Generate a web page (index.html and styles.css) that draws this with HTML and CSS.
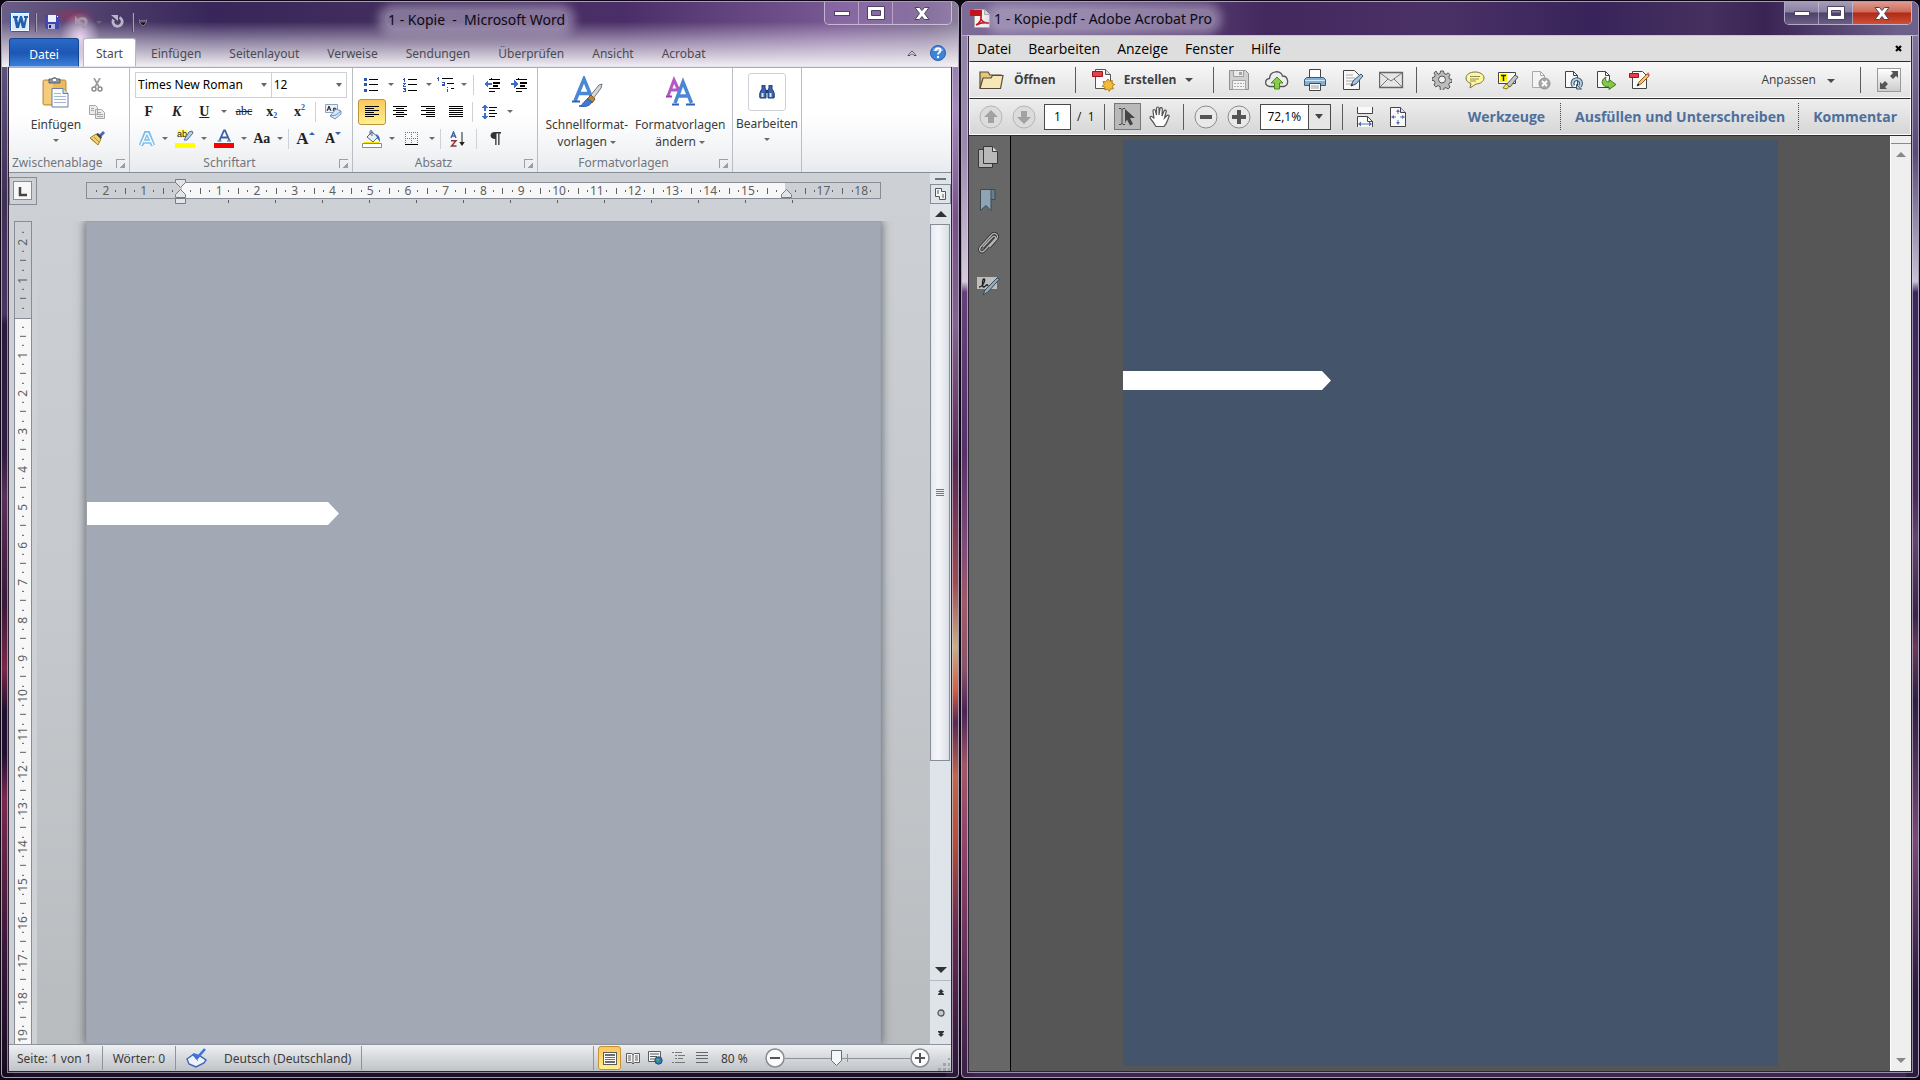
FILE: index.html
```html
<!DOCTYPE html>
<html lang="de">
<head>
  <meta charset="UTF-8" />
  <meta name="viewport" content="width=device-width, initial-scale=1" />
  <title>1 - Kopie</title>
  <link rel="stylesheet" href="styles.css">
</head>
<body>

<!-- Word -->
<section class="window word">
  <header class="word-head">
    <div class="titlebar">
      <div class="qat">
        <button class="qat-btn" aria-label="Word"><svg width="20" height="20" viewBox="0 0 20 20"><rect x=".5" y=".5" width="19" height="19" rx="1" fill="#f4f9ff" stroke="#2a5db0"/><rect x="2" y="2" width="16" height="16" fill="#dcebfb"/><path d="M3 4h5v2H7l1 5 2-7h2l2 7 1-5h-1V4h4v2h-1l-2 10h-3l-1.500-6-1.500 6H6L4 6H3z" fill="#1f5fae"/></svg></button>
        <span class="qat-line"></span>
        <button class="qat-btn" aria-label="Speichern"><svg width="14" height="14" viewBox="0 0 14 14"><path d="M0 0h14v14H2l-2-2z" fill="#4347b0"/><path d="M3 0h8v7H3z" fill="#eef0fb"/><path d="M3 9h7v5H3z" fill="#b9bde6"/><path d="M4 10h2v3H4z" fill="#20246e"/><path d="M12 1h1v1h-1z" fill="#fff"/></svg></button>
        <button class="qat-btn undo" aria-label="Rückgängig"><svg width="14" height="14" viewBox="0 0 14 14"><path d="M4 6c4-5 9-2 8 2-.3 2-2 3-3 5" fill="none" stroke="#a598a6" stroke-width="2.800"/><path d="M1 1v8h8z" fill="#a598a6"/></svg></button>
        <span class="tri"></span>
        <button class="qat-btn" aria-label="Wiederholen"><svg width="14" height="14" viewBox="0 0 14 14"><path d="M9.500 2.500a4.600 4.600 0 1 1-6 2" fill="none" stroke="#bcb5c8" stroke-width="2.800"/><path d="M1 0h7v6z" fill="#bcb5c8"/></svg></button>
        <span class="qat-line"></span>
        <button class="qat-more" aria-label="Anpassen"><svg width="8" height="7" viewBox="0 0 8 7"><path d="M0 0h8v1.500H0zM0 3h8L4 7z" fill="#18121f" stroke="#e8e2f0" stroke-width=".4"/></svg></button>
      </div>
      <h1 class="win-title">1 - Kopie&nbsp; -&nbsp; Microsoft Word</h1>
      <div class="controls">
        <button aria-label="Minimieren"><svg width="16" height="5"><rect x=".5" y=".5" width="15" height="4" fill="#fff" stroke="#4c4360"/></svg></button>
        <button aria-label="Maximieren"><svg width="18" height="14"><path d="M.5.500h17v13H.500zM4.500 4.500v5h9v-5z" fill="#fff" fill-rule="evenodd" stroke="#4c4360"/></svg></button>
        <button class="close" aria-label="Schließen"><svg width="16" height="13" viewBox="0 0 16 13"><path d="M1 .5h4.500L8 3.500 10.500.5H15L10.500 6.500l4.500 6h-4.500L8 9.500l-2.500 3H1l4.500-6z" fill="#fff" stroke="#4c4360"/></svg></button>
      </div>
    </div>
    <nav class="tabs">
      <button class="tab file">Datei</button>
      <button class="tab active">Start</button>
      <button class="tab">Einfügen</button>
      <button class="tab">Seitenlayout</button>
      <button class="tab">Verweise</button>
      <button class="tab">Sendungen</button>
      <button class="tab">Überprüfen</button>
      <button class="tab">Ansicht</button>
      <button class="tab">Acrobat</button>
      <span class="grow"></span>
      <button class="tab-icon" aria-label="Menüband minimieren"><svg width="10" height="8" viewBox="0 0 10 8"><path d="M1 6.500L5 2l4 4.500H7L5 4.500 3 6.500z" fill="#fff" stroke="#444b57"/></svg></button>
      <button class="tab-icon" aria-label="Hilfe"><svg width="16" height="16" viewBox="0 0 16 16"><circle cx="8" cy="8" r="7.500" fill="#3f83d8" stroke="#2360ad"/><path d="M3 6a5 4 0 0 1 10 0z" fill="#8bb8ee"/><path d="M5.500 6c0-3.500 5-3.500 5-.5 0 2-2.500 2-2.500 4" fill="none" stroke="#fff" stroke-width="1.800"/><circle cx="8" cy="12" r="1.200" fill="#fff"/></svg></button>
    </nav>
  </header>

  <div class="client">
    <div class="ribbon">
      <div class="group clip">
        <div class="group-body">
          <button class="big paste">
            <svg width="30" height="32" viewBox="0 0 30 32"><rect x="2" y="4" width="23" height="25" rx="1.500" fill="#eeb95a" stroke="#b98a3c"/><path d="M3 5h9v23H3z" fill="#f5cb7c"/><path d="M8 3h3a3 3 0 0 1 5 0h3v4H8z" fill="#8d97a3" stroke="#59626d"/><rect x="12" y="3" width="3" height="2" fill="#fff"/><path d="M11 12.500h11l5 5V31H11z" fill="#fafcff" stroke="#6b7f9d"/><path d="M22 12.500v5h5" fill="#cfdced" stroke="#6b7f9d"/><path d="M13 17.500h7M13 20.500h12M13 23.500h12M13 26.500h12" stroke="#a5b7cf"/></svg>
            <span>Einfügen</span><i class="tri"></i>
          </button>
          <div class="small-col">
            <button class="ib" aria-label="Ausschneiden"><svg width="12" height="14" viewBox="0 0 12 14"><path d="M3 0l5 9M9 0L4 9" stroke="#9a9a9a" stroke-width="1.600"/><circle cx="3" cy="11" r="2" fill="none" stroke="#8c8c8c" stroke-width="1.500"/><circle cx="9" cy="11" r="2" fill="none" stroke="#8c8c8c" stroke-width="1.500"/></svg></button>
            <button class="ib" aria-label="Kopieren"><svg width="16" height="14" viewBox="0 0 16 14"><path d="M.5.500h6l2 2v7h-8zM6.500 4.500h6l3 3v6h-9z" fill="#ececec" stroke="#a5a5a5"/><path d="M2 3.500h3M2 5.500h3M8 7.500h4M8 9.500h6M8 11.500h6" stroke="#a5a5a5"/></svg></button>
            <button class="ib" aria-label="Format übertragen"><svg width="16" height="15" viewBox="0 0 16 15"><path d="M10 4l4-4 2 2-4 4z" fill="#5063b4"/><path d="M1 7l6-4 5 5-3 6z" fill="#f0d272" stroke="#a07b28"/><path d="M7 3l2-1 4 4-1 2z" fill="#444"/><path d="M3 8l5 5M5 6l5 5" stroke="#b48d35"/></svg></button>
          </div>
        </div>
        <div class="group-label"><span>Zwischenablage</span><i class="launch"></i></div>
      </div>

      <div class="group font">
        <div class="group-body rows">
          <div class="row combos">
            <select class="font-name" aria-label="Schriftart"><option>Times New Roman</option></select>
            <select class="font-size" aria-label="Schriftgrad"><option>12</option></select>
          </div>
          <div class="row">
            <button class="ib glyph"><b>F</b></button>
            <button class="ib glyph"><b><em>K</em></b></button>
            <button class="ib glyph"><b><u>U</u></b></button><button class="ar" aria-label="Unterstreichung"><i class="tri"></i></button>
            <button class="ib glyph sm"><s>abc</s></button>
            <button class="ib glyph"><b>x</b><sub>2</sub></button>
            <button class="ib glyph"><b>x</b><sup>2</sup></button>
            <span class="sep"></span>
            <button class="ib" aria-label="Formatierung löschen"><svg width="17" height="16" viewBox="0 0 17 16"><path d="M.5.500h12v8H.500z" fill="#eaf1fb" stroke="#8ba3c7"/><path d="M2 7l2-5 2 5M3 5h2M8 4.500c3-1 3 0 3 2.500-2 0-3 0-3-1s2-1 3-1" fill="none" stroke="#222"/><path d="M5 12l6-7 5 2v3l-6 5z" fill="#dce8f8" stroke="#6f8fc0"/><path d="M5 12l6-1 5-4" fill="none" stroke="#6f8fc0"/></svg></button>
          </div>
          <div class="row">
            <button class="ib narrow" aria-label="Texteffekte"><svg width="16" height="16" viewBox="0 0 16 16"><path d="M2 14.500L7 2h2l5 12.500M4.500 10.500h7" fill="none" stroke="#7fbce8" stroke-width="4.500"/><path d="M2 14L7.200 2.500h1.600L14 14M4.500 10.500h7" fill="none" stroke="#f4faff" stroke-width="1.600"/></svg></button><button class="ar" aria-label="Effekte"><i class="tri"></i></button>
            <button class="ib" aria-label="Texthervorhebungsfarbe"><svg width="20" height="19" viewBox="0 0 20 19"><path d="M2 1h10v8H2z" fill="#ffff64"/><text x="2" y="8" font-size="9" font-family="Liberation Sans" fill="#222">ab</text><path d="M9 11l5-8 3-1 1 2-6 7z" fill="#b9cdea" stroke="#506d9c"/><path d="M0 14h20v5H0z" fill="#ff0"/></svg></button><button class="ar" aria-label="Hervorhebung"><i class="tri"></i></button>
            <button class="ib" aria-label="Schriftfarbe"><svg width="20" height="19" viewBox="0 0 20 19"><path d="M5.500 11.500L10 1.500h1L15.500 11.500M7 8.500h7" fill="none" stroke="#3c5fa5" stroke-width="1.800"/><path d="M3.500 12h4M13 12h4" stroke="#3c5fa5" stroke-width="1.200"/><path d="M0 14h20v5H0z" fill="#f00"/></svg></button><button class="ar" aria-label="Farbe"><i class="tri"></i></button>
            <button class="ib narrow glyph"><b>Aa</b></button><button class="ar" aria-label="Groß-/Kleinschreibung"><i class="tri"></i></button>
            <span class="sep"></span>
            <button class="ib glyph lg"><b>A</b><i class="up"></i></button>
            <button class="ib glyph"><b>A</b><i class="down"></i></button>
          </div>
        </div>
        <div class="group-label"><span>Schriftart</span><i class="launch"></i></div>
      </div>

      <div class="group para">
        <div class="group-body rows">
          <div class="row">
            <button class="ib" aria-label="Aufzählungszeichen"><svg width="14" height="14" shape-rendering="crispEdges"><path d="M5 1h9v1H5zM5 6h9v1H5zM5 12h9v1H5z"/><path d="M0 0h3v3H0zM0 5h3v3H0zM0 11h3v3H0z" fill="#2c56b0"/></svg></button><button class="ar" aria-label="Aufzählung"><i class="tri"></i></button>
            <button class="ib" aria-label="Nummerierung"><svg width="14" height="14" shape-rendering="crispEdges"><path d="M5 1h9v1H5zM5 6h9v1H5zM5 12h9v1H5z"/><path d="M1 0h1v4H1zM0 1h1v1H0zM0 5h3v1H2v1H1v1h2v1H0V7h1V6H0zM0 10h3v4H0v-1h2v-1H1v-1H0z" fill="#2c56b0"/></svg></button><button class="ar" aria-label="Nummern"><i class="tri"></i></button>
            <button class="ib narrow" aria-label="Liste mit mehreren Ebenen"><svg width="18" height="15" shape-rendering="crispEdges"><path d="M5 1h11v1H5zM10 6h7v1h-7zM14 11h3v1h-3z"/><path d="M1 0h1v4H1zM0 1h1v1H0zM5 5h3v4H5V7h2V6H5zM10 10h1v1h-1zM10 12h1v3h-1z" fill="#2c56b0"/></svg></button><button class="ar" aria-label="Ebenen"><i class="tri"></i></button>
            <span class="sep wide"></span>
            <button class="ib" aria-label="Einzug verkleinern"><svg width="16" height="14" shape-rendering="crispEdges"><path d="M5 1h11v1H5zM9 4h7v2H9zM9 7h5v2H9zM5 10h11v1H5zM5 13h6v1H5zM7 0h1v2H7z"/><path d="M0 6l4-4v3h4v2H4v3z" fill="#3a6fd0"/></svg></button>
            <button class="ib" aria-label="Einzug vergrößern"><svg width="16" height="14" shape-rendering="crispEdges"><path d="M5 1h11v1H5zM9 4h7v2H9zM9 7h5v2H9zM5 10h11v1H5zM5 13h6v1H5zM7 0h1v2H7z"/><path d="M7 6L3 2v3H0v2h3v3z" fill="#3a6fd0"/></svg></button>
          </div>
          <div class="row">
            <button class="ib on" aria-label="Linksbündig"><svg width="14" height="12" shape-rendering="crispEdges"><path d="M0 0h14v1H0zM0 2h9v1H0zM0 4h14v1H0zM0 6h9v1H0zM0 8h14v1H0zM0 10h9v1H0z"/></svg></button>
            <button class="ib" aria-label="Zentriert"><svg width="14" height="12" shape-rendering="crispEdges"><path d="M0 0h14v1H0zM3 2h8v1H3zM0 4h14v1H0zM3 6h8v1H3zM0 8h14v1H0zM3 10h8v1H3z"/></svg></button>
            <button class="ib" aria-label="Rechtsbündig"><svg width="14" height="12" shape-rendering="crispEdges"><path d="M0 0h14v1H0zM5 2h9v1H5zM0 4h14v1H0zM5 6h9v1H5zM0 8h14v1H0zM5 10h9v1H5z"/></svg></button>
            <button class="ib" aria-label="Blocksatz"><svg width="14" height="12" shape-rendering="crispEdges"><path d="M0 0h14v1H0zM0 2h14v1H0zM0 4h14v1H0zM0 6h14v1H0zM0 8h14v1H0zM0 10h14v1H0z"/></svg></button>
            <span class="sep"></span>
            <button class="ib" aria-label="Zeilenabstand"><svg width="16" height="16" shape-rendering="crispEdges"><path d="M7 3h8v1H7zM7 6h6v1H7zM7 9h8v1H7zM7 12h6v1H7z"/><path d="M3 0l3 4H4v3H2V4H0zM3 16l3-4H4V9H2v3H0z" fill="#3a6fd0"/></svg></button><button class="ar" aria-label="Abstand"><i class="tri"></i></button>
          </div>
          <div class="row">
            <button class="ib" aria-label="Schattierung"><svg width="20" height="18" viewBox="0 0 20 18"><path d="M5 7l5-5 6 5-5 5z" fill="#e7eef7" stroke="#56677d"/><path d="M8 5V1q1-1 2 0v5" fill="none" stroke="#56677d"/><path d="M14 4q4 1 4 8l-3-4z" fill="#3565b0"/><path d="M2 12h15v1H2z" fill="#f4e400"/><path d="M.5 13.500h19v4H.500z" fill="#fff" stroke="#8c8c8c"/></svg></button><button class="ar" aria-label="Schattierungsfarbe"><i class="tri"></i></button>
            <button class="ib" aria-label="Rahmen"><svg width="14" height="14"><path d="M.5 0v12M6.500 0v12M12.500 0v12M0 .5h13M0 6.500h13" stroke="#777" stroke-dasharray="1 1"/><path d="M0 12h13v1H0z"/></svg></button><button class="ar" aria-label="Rahmenlinien"><i class="tri"></i></button>
            <span class="sep"></span>
            <button class="ib" aria-label="Sortieren"><svg width="16" height="16" viewBox="0 0 16 16"><path d="M1 7l2.500-6L6 7M2 5h3" fill="none" stroke="#3a62ae" stroke-width="1.400"/><path d="M1 9.700h5L1.500 15H6.500" fill="none" stroke="#8c3434" stroke-width="1.400"/><path d="M11.500 1h1v10h2.300L12 15l-2.800-4h2.300z" fill="#222"/></svg></button>
            <span class="sep wide"></span>
            <button class="ib" aria-label="Alle anzeigen"><svg width="11" height="13" viewBox="0 0 11 13"><path d="M5 0h6v1.500H9.500V13H8.200V1.500H6.500V13H5.200V7C-1 7-1 0 5 0z" fill="#333"/></svg></button>
          </div>
        </div>
        <div class="group-label"><span>Absatz</span><i class="launch"></i></div>
      </div>

      <div class="group styles">
        <div class="group-body">
          <button class="big">
            <svg width="32" height="32" viewBox="0 0 32 32"><path d="M4 25L13 3l9 22M7.500 17.500h11" fill="none" stroke="#4b87d6" stroke-width="3.500"/><path d="M1 25.500h8M16 25.500h6" stroke="#2f62b0" stroke-width="2"/><path d="M19 20l9-11 3-1-1 4-8 11z" fill="#d5d8dc" stroke="#70767e"/><path d="M16 23l4-4 4 4-3 4z" fill="#b9853c" stroke="#7a5422"/><path d="M8 30c4 0 5-6 9-7l4 3c-3 5-8 5-13 4z" fill="#3f7bd0" stroke="#2a5cab"/></svg>
            <span>Schnellformat-</span><span>vorlagen <i class="tri"></i></span>
          </button>
          <button class="big">
            <svg width="32" height="32" viewBox="0 0 32 32"><path d="M4 20L10 4l6 13M6.500 14h7" fill="none" stroke="#b558c4" stroke-width="3"/><path d="M2 20.500h6" stroke="#9c3aac" stroke-width="2"/><path d="M11 27L19 6l8.500 21M14 20h10" fill="none" stroke="#4b87d6" stroke-width="3.500"/><path d="M8 28.500h7M22 28.500h9" stroke="#2f62b0" stroke-width="2"/></svg>
            <span>Formatvorlagen</span><span>ändern <i class="tri"></i></span>
          </button>
        </div>
        <div class="group-label"><span>Formatvorlagen</span><i class="launch"></i></div>
      </div>

      <div class="group edit">
        <button class="big">
          <span class="find-box"><svg width="16" height="14" viewBox="0 0 16 14"><path d="M3 0h3v3l1 2v8H1c-1-3 0-7 2-9zM10 0h3v4c2 2 3 6 2 9H9V5l1-2z" fill="#3c63a8" stroke="#1f3f7c"/><path d="M7 5h2v3H7z" fill="#1f3f7c"/><path d="M2.500 8h2v4h-2zM10.500 8h2v4h-2z" fill="#dbe8fa"/></svg></span>
          <span>Bearbeiten</span><i class="tri"></i>
        </button>
      </div>
    </div>

    <div class="workspace">
      <div class="doc-area">
        <div class="ruler-row">
          <button class="tab-stop" aria-label="Tabstopp"><svg width="20" height="20"><rect x=".5" y=".5" width="18" height="18" fill="#f7f7f8" stroke="#868d97"/><path d="M7 6v8h7" fill="none" stroke="#444" stroke-width="2.500"/></svg></button>
          <div class="ruler-wrap">
            <div class="hruler" id="hruler"></div>
            <div class="markers">
              <svg width="12" height="26" viewBox="0 0 12 26"><path d="M.5.500h10v3l-5 5-5-5zM.500 18.500v-3l5-5 5 5v3zM.500 19.500h10v5H.500z" fill="#e2e4e7" stroke="#777d86"/></svg>
              <svg width="12" height="26" viewBox="0 0 12 26"><path d="M.5 18.500v-3l5-5 5 5v3z" fill="#e2e4e7" stroke="#777d86"/></svg>
            </div>
          </div>
        </div>
        <div class="page-row">
          <div class="vruler-wrap"><div class="vruler" id="vruler"></div></div>
          <div class="page"><svg class="arrow" width="252" height="23" viewBox="0 0 252 23"><path d="M0 0h241l11 11.500L241 23H0z" fill="#fff"/></svg></div>
        </div>
      </div>
      <div class="scroll">
        <i class="split"></i>
        <button class="sb ruler-toggle" aria-label="Lineal"><svg width="14" height="14" viewBox="0 0 14 14"><path d="M1.500 1.500h6v3h4v8h-6v-3h-4z" fill="#f5f6f8" stroke="#555"/><path d="M3 4h2M3 6h2M8 8h2M8 10h2" stroke="#555"/></svg></button>
        <button class="sb" aria-label="Nach oben"><svg width="12" height="6"><path d="M0 6l6-6 6 6z" fill="#333"/></svg></button>
        <div class="track"><div class="thumb"><i></i></div></div>
        <button class="sb" aria-label="Nach unten"><svg width="12" height="6"><path d="M0 0h12L6 6z" fill="#333"/></svg></button>
        <div class="browse">
          <button aria-label="Vorherige Seite"><svg width="6" height="6"><path d="M3 0l3 3H0zM3 2l3 3H0zM0 5h6v1H0z" fill="#333"/></svg></button>
          <button aria-label="Browseobjekt"><svg width="8" height="8"><circle cx="4" cy="4" r="3" fill="#c6c9cc" stroke="#555" stroke-width="1.300"/></svg></button>
          <button aria-label="Nächste Seite"><svg width="6" height="6"><path d="M0 0h6v1H0zM0 1h6L3 4zM0 3h6L3 6z" fill="#333"/></svg></button>
        </div>
      </div>
    </div>

    <footer class="status">
      <span class="st">Seite: 1 von 1</span>
      <span class="st">Wörter: 0</span>
      <span class="st lang"><svg width="22" height="20" viewBox="0 0 22 20"><path d="M1 11l7-5 6 2 6 4-2 3-8 4-7-3z" fill="#eef2fa" stroke="#3f65b5" stroke-width="1.400"/><path d="M9 10l3 3" stroke="#9a9a9a"/><path d="M7 6l4 4 8-9" fill="none" stroke="#3d72d8" stroke-width="2.600"/></svg>Deutsch (Deutschland)</span>
      <span class="grow"></span>
      <i class="st-line"></i>
      <button class="vw on" aria-label="Seitenlayout"><svg width="14" height="13" shape-rendering="crispEdges"><rect x="0" y="0" width="14" height="13" fill="#5c5c5c"/><path d="M1 1h12v11H1z" fill="#fff"/><path d="M2 2h10v2H2zM2 5h10v1H2zM2 7h10v1H2zM2 9h10v2H2z" fill="#6d6d6d"/></svg></button>
      <button class="vw" aria-label="Vollbild-Lesemodus"><svg width="14" height="13" viewBox="0 0 14 13"><path d="M.5 1.500h5l1.500 1 1.500-1h5v9h-5L7 12l-1.500-1.500h-5z" fill="#f6f6f6" stroke="#5c5c5c"/><path d="M7 2v9M2 4h3M2 6h3M2 8h3M9 4h3M9 6h3M9 8h3" stroke="#5c5c5c"/></svg></button>
      <button class="vw" aria-label="Weblayout"><svg width="15" height="14" viewBox="0 0 15 14"><path d="M.5.500h12v10H.500z" fill="#f6f6f6" stroke="#5c5c5c"/><path d="M2 3h9M2 5.500h7M2 8h5" stroke="#5c5c5c"/><circle cx="10.500" cy="9.500" r="3.700" fill="#2f77b5" stroke="#2a4d79"/><path d="M8 9q2-3 3-1t-1 3z" fill="#4fae57"/></svg></button>
      <button class="vw" aria-label="Gliederung"><svg width="13" height="12" shape-rendering="crispEdges"><path d="M0 0h2v1H0zM3 0h7v1H3zM3 3h2v1H3zM6 3h7v1H6zM3 6h2v1H3zM6 6h5v1H6zM0 10h2v1H0zM3 10h10v1H3z" fill="#777"/></svg></button>
      <button class="vw" aria-label="Entwurf"><svg width="12" height="12" shape-rendering="crispEdges"><path d="M0 0h12v1H0zM0 3h12v1H0zM0 6h12v1H0zM0 10h12v1H0z" fill="#666"/></svg></button>
      <button class="zoom-val">80 %</button>
      <button class="zoom-btn" aria-label="Verkleinern"><svg width="20" height="20"><circle cx="10" cy="10" r="9" fill="#fbfbfc" stroke="#868c94" stroke-width="1.500"/><path d="M5 9h10v2H5z" fill="#555"/></svg></button>
      <input class="zoom-range" type="range" min="10" max="190" value="82" aria-label="Zoom">
      <button class="zoom-btn" aria-label="Vergrößern"><svg width="20" height="20"><circle cx="10" cy="10" r="9" fill="#fbfbfc" stroke="#868c94" stroke-width="1.500"/><path d="M5 9h4V5h2v4h4v2h-4v4H9v-4H5z" fill="#555"/></svg></button>
      <svg class="grip" width="13" height="13" shape-rendering="crispEdges"><path d="M10 0h2v2h-2zM5 5h3v3H5zM10 5h2v3h-2zM0 10h3v3H0zM5 10h3v3H5zM10 10h2v3h-2z" fill="#a0a6ae"/></svg>
    </footer>
  </div>
</section>

<!-- Acrobat -->
<section class="window acro">
  <header class="titlebar">
    <svg class="pdf-icon" width="22" height="20" viewBox="0 0 22 20"><path d="M4.500.500h10l5 5v13h-15z" fill="#f6f6f6" stroke="#a7a7a7"/><path d="M14.500.500v5h5" fill="#ddd" stroke="#a7a7a7"/><path d="M0 1h12v6H0z" fill="#c3161c"/><path d="M6 16c4-2 6-6 5-9-1 4 3 8 8 7-5-1-9 0-13 2z" fill="none" stroke="#c3161c" stroke-width="1.600"/></svg>
    <h1 class="win-title">1 - Kopie.pdf - Adobe Acrobat Pro</h1>
    <div class="controls">
      <button aria-label="Minimieren"><svg width="16" height="5"><rect x=".5" y=".5" width="15" height="4" fill="#fff" stroke="#4c4360"/></svg></button>
      <button aria-label="Maximieren"><svg width="18" height="14"><path d="M.5.500h17v13H.500zM4.500 4.500v5h9v-5z" fill="#fff" fill-rule="evenodd" stroke="#4c4360"/></svg></button>
      <button class="close" aria-label="Schließen"><svg width="16" height="13" viewBox="0 0 16 13"><path d="M1 .5h4.500L8 3.500 10.500.5H15L10.500 6.500l4.500 6h-4.500L8 9.500l-2.500 3H1l4.500-6z" fill="#fff" stroke="#4c4360"/></svg></button>
    </div>
  </header>

  <div class="client">
    <nav class="menubar">
      <button>Datei</button>
      <button>Bearbeiten</button>
      <button>Anzeige</button>
      <button>Fenster</button>
      <button>Hilfe</button>
      <span class="grow"></span>
      <button class="menu-x" aria-label="Dokument schließen"><svg width="7" height="7"><path d="M1 1l5 5M6 1L1 6" stroke="#000" stroke-width="2.200"/></svg></button>
    </nav>

    <div class="bar">
      <button class="txt"><svg width="26" height="20" viewBox="0 0 26 20"><path d="M1 18V2h8l2 3h11v4" fill="#e2c878" stroke="#55493a" stroke-width="1.200"/><path d="M1 18.500L4 8h8l1.500-2.500H24L21.500 18.500z" fill="#f6e8b6" stroke="#55493a" stroke-width="1.200"/></svg>Öffnen</button>
      <i class="bar-sep"></i>
      <button class="txt"><svg width="24" height="24" viewBox="0 0 24 24"><path d="M4.500 1.500h10l5 5v14h-15z" fill="#fbfbfb" stroke="#555"/><path d="M14.500 1.500v5h5" fill="#ddd" stroke="#555"/><path d="M1.500 3.500h10v5h-10z" fill="#e5404a" stroke="#a3151e"/><path d="M17 11l1.600 2.300 2.700-.8-.3 2.800 2.600 1.200-2.300 1.700 1 2.700-2.800-.1-1.200 2.600L16.500 21l-2.600 1-.1-2.800-2.600-1 2-2-1.200-2.600 2.800.1z" fill="#f3bb3d" stroke="#b07d16"/></svg>Erstellen <i class="tri big-tri"></i></button>
      <i class="bar-sep"></i>
      <button class="tb dim" aria-label="Speichern"><svg width="22" height="22" viewBox="0 0 22 22"><path d="M1.500 1.500h16l3 3v16h-19z" fill="#cfcfcf" stroke="#8f8f8f"/><path d="M5.500 1.500h10v6h-10z" fill="#ececec" stroke="#9c9c9c"/><path d="M11 3h3v3h-3z" fill="#a5a5a5"/><path d="M4.500 11.500h13v9h-13z" fill="#f2f2f2" stroke="#a5a5a5"/><path d="M6 14.500h10M6 17.500h10" stroke="#aaa" stroke-dasharray="2 1"/></svg></button>
      <button class="tb" aria-label="Cloud"><svg width="24" height="20" viewBox="0 0 24 20"><path d="M5 16.500C-1 16-.5 9 4.500 8.500 5 0 16 0 17.500 6c6 0 7 9 1.500 10.500z" fill="#ededed" stroke="#555" stroke-width="1.300"/><path d="M12 7l6 6h-3.500v6h-5v-6H6z" fill="#8acb50" stroke="#4a8a1c"/></svg></button>
      <button class="tb" aria-label="Drucken"><svg width="24" height="24" viewBox="0 0 24 24"><path d="M6.500 1.500h11v9h-11z" fill="#fff" stroke="#444"/><path d="M3.500 9.500h17l2 2v6h-21v-6z" fill="#84b0d3" stroke="#3b5c78"/><path d="M2 12.500h20" stroke="#d2e6f5"/><path d="M6.500 15.500h11v7h-11z" fill="#fff" stroke="#444"/><path d="M8 18h8M8 20h8" stroke="#999"/></svg></button>
      <button class="tb" aria-label="Bearbeiten"><svg width="22" height="22" viewBox="0 0 22 22"><path d="M1.500 1.500h11l5 5v14h-16z" fill="#f8f8f8" stroke="#444"/><path d="M4 6h7M4 9h9M4 12h7M4 15h6" stroke="#aaa"/><path d="M9 17l2-5 8-7 2 2-7 8z" fill="#a5c6e2" stroke="#3b556e"/><path d="M9 17l2-1-1-1z"/></svg></button>
      <button class="tb" aria-label="E-Mail"><svg width="25" height="18" viewBox="0 0 25 18"><path d="M.5 1.500h23v15H.500z" fill="#e6e6e6" stroke="#666" stroke-width="1.300"/><path d="M1 2l11 8L23 2M1 16l8-8M23 16l-8-8" fill="none" stroke="#777"/></svg></button>
      <i class="bar-sep"></i>
      <button class="tb slim" aria-label="Einstellungen"><svg width="20" height="20" viewBox="0 0 20 20"><path d="M8.500 1h3l.5 2.500 2 .8 2.200-1.400 1.900 2-1.300 2.100.8 2 2.400.5v2.800l-2.500.5-.8 2 1.300 2.200-1.900 1.900-2.200-1.300-2 .8-.5 2.600h-3L8 16.400l-2-.8-2.200 1.300-1.900-1.900 1.300-2.200-.8-2L0 10.300V7.800L2.400 7l.8-2L1.900 3l2-2L6 4.300l2-.8z" fill="#bdbdbd" stroke="#555"/><circle cx="10" cy="9.500" r="3.500" fill="#f0f0f0" stroke="#555"/></svg></button>
      <button class="tb slim" aria-label="Notiz"><svg width="20" height="18" viewBox="0 0 20 18"><path d="M10 1c5 0 9 2.500 9 6s-4 6-8 6l-6 4 1-4.500C3 11.500 1 10 1 7c0-3.500 4-6 9-6z" fill="#fff79a" stroke="#77724a"/><path d="M5 5.500h10M5 8h9M5 10h6" stroke="#8f8b5c"/></svg></button>
      <button class="tb slim" aria-label="Hervorheben"><svg width="22" height="20" viewBox="0 0 22 20"><path d="M1.500 2.500h17v11h-17z" fill="#fff" stroke="#444"/><path d="M3 4h7v8H3z" fill="#fff200"/><path d="M4 5.500h5M6.500 5.500V11" stroke="#222" stroke-width="1.400"/><path d="M9 15l9-10 3 2-8 10z" fill="#c6c6c6" stroke="#555"/><path d="M6 18l3-4 3 2-2 3z" fill="#f5e85c" stroke="#857a1d"/></svg></button>
      <button class="tb slim dim" aria-label="Seite löschen"><svg width="20" height="20" viewBox="0 0 20 20"><path d="M1.500 1.500h8l4 4v12h-12z" fill="#f4f4f4" stroke="#aaa"/><path d="M9.500 1.500v4h4" fill="none" stroke="#aaa"/><circle cx="13.500" cy="13.500" r="5.500" fill="#a7a7a7" stroke="#909090"/><path d="M11 11l5 5M16 11l-5 5" stroke="#fff" stroke-width="1.800"/></svg></button>
      <button class="tb slim" aria-label="Seite drehen"><svg width="20" height="20" viewBox="0 0 20 20"><path d="M1.500 1.500h8l4 4v12h-12z" fill="#fbfbfb" stroke="#444"/><path d="M9.500 1.500v4h4" fill="none" stroke="#444"/><path d="M9.500 16a4.200 4.200 0 1 1 6.500 0" fill="none" stroke="#41566c" stroke-width="4"/><path d="M9.500 16a4.200 4.200 0 1 1 6.500 0" fill="none" stroke="#b2d0ea" stroke-width="2"/><path d="M12.500 14.500v4.500h5z" fill="#b2d0ea" stroke="#41566c"/></svg></button>
      <button class="tb slim" aria-label="Seite exportieren"><svg width="21" height="20" viewBox="0 0 21 20"><path d="M1.500 1.500h8l4 4v12h-12z" fill="#fbfbfb" stroke="#444"/><path d="M9.500 1.500v4h4" fill="none" stroke="#444"/><path d="M10 7c-6 3-5 10 3 10v2.500l7-5-7-5V12c-3 0-4-2-3-5z" fill="#84c94c" stroke="#3c7818"/></svg></button>
      <button class="tb slim" aria-label="PDF bearbeiten"><svg width="21" height="20" viewBox="0 0 21 20"><path d="M3.500 1.500h10l4 4v13h-14z" fill="#fbfbfb" stroke="#444"/><path d="M.5 3.500h9v4h-9z" fill="#e5404a" stroke="#a3151e"/><path d="M8 16l2-4 8-8 2 2-8 8z" fill="#f5c377" stroke="#94601f"/><path d="M18 4l2 2 1-1-2-3z" fill="#d66"/><path d="M8 16l2.500-1-1.500-1.500z"/></svg></button>
      <span class="grow"></span>
      <button class="custom">Anpassen <i class="tri big-tri"></i></button>
      <i class="bar-sep"></i>
      <button class="expand" aria-label="Vollbild"><svg width="20" height="20"><path d="M19 1v7l-2-2-3 3-3-3 3-3-2-2zM1 19v-7l2 2 3-3 3 3-3 3 2 2z" fill="#555"/></svg></button>
    </div>

    <div class="bar second">
      <button class="rnd dim" aria-label="Vorherige Seite"><svg width="24" height="24"><circle cx="12" cy="12" r="11" fill="#dcdcdc" stroke="#b4b4b4"/><path d="M12 5l7 7h-4v6H9v-6H5z" fill="#a2a2a2"/></svg></button>
      <button class="rnd dim" aria-label="Nächste Seite"><svg width="24" height="24"><circle cx="12" cy="12" r="11" fill="#dcdcdc" stroke="#b4b4b4"/><path d="M12 19l7-7h-4V6H9v6H5z" fill="#a2a2a2"/></svg></button>
      <input class="page-no" type="text" value="1" aria-label="Seite">
      <span class="page-of">/&nbsp; 1</span>
      <i class="bar-sep"></i>
      <button class="cursor" aria-label="Auswahl"><svg width="20" height="20"><path d="M2 1.500h2l1 1 1-1h2M5 2v15M2 17.500h2l1-1 1 1h2" fill="none" stroke="#444"/><path d="M8 2l10 9h-5l3 6-3 1.500-3-6L8 16z" fill="#444"/></svg></button>
      <button class="rnd hand" aria-label="Hand"><svg width="21" height="22" viewBox="0 0 21 22"><path d="M6 19C4 15 1 13 1 11.500s2-2 4 1L4 5c0-2 2-2 2.500 0l1 4V2.500C7.500.5 10 .5 10 2.500V9l1-6.500c.5-1.500 2.500-1 2.300.5L13 10l2-5c.6-1.500 2.500-1 2.200.6L15.500 12l2.500-2.500c1-1 2.500 0 2 1C18.500 14 18 18 15 20.500H7z" fill="#fdfdfd" stroke="#555" stroke-width="1.200"/></svg></button>
      <i class="bar-sep"></i>
      <button class="rnd" aria-label="Verkleinern"><svg width="24" height="24"><circle cx="12" cy="12" r="11" fill="#e9e9e9" stroke="#8b8b8b"/><path d="M6 10h12v4H6z" fill="#555"/></svg></button>
      <button class="rnd" aria-label="Vergrößern"><svg width="24" height="24"><circle cx="12" cy="12" r="11" fill="#e9e9e9" stroke="#8b8b8b"/><path d="M5 10h5V5h4v5h5v4h-5v5h-4v-5H5z" fill="#555"/></svg></button>
      <select class="zoom-sel" aria-label="Zoomfaktor"><option>72,1%</option></select>
      <i class="bar-sep"></i>
      <button class="rnd" aria-label="Fensterbreite"><svg width="18" height="22" viewBox="0 0 18 22"><path d="M1.500 1v6.500h15V1" fill="#fafafa" stroke="#444"/><path d="M1.500 21V10.500h10l5 5V21z" fill="#fafafa"/><path d="M1.500 21V10.500h10l5 5V21M11.500 10.500v5h5" fill="none" stroke="#444"/><path d="M2 18l3-2.500V17.500h8v-2l3 2.500-3 2.500v-2H5v2z" fill="#5873b5"/></svg></button>
      <button class="rnd" aria-label="Ganze Seite"><svg width="18" height="22" viewBox="0 0 18 22"><path d="M1.500 1.500h10l5 5v14h-15z" fill="#fafafa" stroke="#444"/><path d="M11.500 1.500v5h5" fill="#ddd" stroke="#444"/><path d="M9 3l2 3H7zM9 19l2-3H7zM2 11l3-2v4zM16 11l-3-2v4z" fill="#5873b5"/><path d="M9 5v3M9 14v3M4 11h3M11 11h3" stroke="#5873b5"/></svg></button>
      <span class="grow"></span>
      <div class="panels">
        <button>Werkzeuge</button>
        <button>Ausfüllen und Unterschreiben</button>
        <button>Kommentar</button>
      </div>
    </div>

    <div class="viewer">
      <aside class="side">
        <button aria-label="Seitenminiaturen"><svg width="22" height="24" viewBox="0 0 22 24"><path d="M1.500 4.500h14v18h-14z" fill="#b4b4b4" stroke="#383838"/><path d="M6.500 1.500h9l5 5v12h-14z" fill="#b9b9b9" stroke="#383838"/><path d="M15.500 1.500v5h5" fill="#ddd" stroke="#383838"/></svg></button>
        <button aria-label="Lesezeichen"><svg width="20" height="24" viewBox="0 0 20 24"><path d="M12 1.500h5v10h-5z" fill="#66808f" stroke="#3d4a54"/><path d="M2.500 1.500H13v21l-5-5-5.500 5z" fill="#8ea3b3" stroke="#3d4a54"/></svg></button>
        <button aria-label="Anlagen"><svg width="22" height="24" viewBox="0 0 22 24"><path d="M6 16L15.500 6c2-2 4 0 2.500 2L7.500 19.500C4.500 22.500 1 19.500 3.500 16L14.500 4c3-3.500 8 0 5 4l-7 8" fill="none" stroke="#333" stroke-width="3"/><path d="M6 16L15.500 6c2-2 4 0 2.500 2L7.500 19.500C4.500 22.500 1 19.500 3.500 16L14.500 4c3-3.500 8 0 5 4l-7 8" fill="none" stroke="#b5b5b5" stroke-width="1.300"/></svg></button>
        <button aria-label="Unterschriften"><svg width="24" height="20" viewBox="0 0 24 20"><path d="M1 1h20v12H1z" fill="#bdbdbd"/><path d="M3 11c4 0 7-8 5-8S6 12 8 11s3-4 4-1" fill="none" stroke="#222" stroke-width="1.400"/><path d="M7 19l2-5L21 2l2.500 1L12 16z" fill="#8ea9bb" stroke="#3d4a54"/></svg></button>
      </aside>
      <div class="canvas">
        <div class="pdf-page"><svg class="arrow" width="208" height="19" viewBox="0 0 208 19"><path d="M0 0h199l9 9.500-9 9.500H0z" fill="#fff"/></svg></div>
      </div>
      <div class="pdf-scroll">
        <i class="stub"></i>
        <button aria-label="Nach oben"><svg width="10" height="5"><path d="M0 5l5-5 5 5z" fill="#888"/></svg></button>
        <span class="grow"></span>
        <button aria-label="Nach unten"><svg width="10" height="5"><path d="M0 0h10L5 5z" fill="#888"/></svg></button>
      </div>
    </div>
  </div>
</section>

<script>
  // Lineale: eine Zelle pro Zentimeter, Nullpunkt und Randwerte ohne Zahl
  function linealBauen(id, von, bis, leer) {
    const ziel = document.getElementById(id);
    for (let n = von; n <= bis; n++) {
      const zelle = document.createElement('span');
      if (!leer.includes(n)) zelle.textContent = Math.abs(n);
      ziel.appendChild(zelle);
    }
  }

  linealBauen('hruler', -2, 18, [0, 16]);
  linealBauen('vruler', -2, 19, [0]);
</script>

</body>
</html>
```
FILE: styles.css
```css
* {
  box-sizing: border-box;
}
html, body {
  height: 100%;
}
body {
  margin: 0;
  padding: 1px 1px 2px;
  display: grid;
  grid-template-columns: 1fr 1fr;
  gap: 2px;
  background: #0d0613;
  font-family: "Open Sans", "Noto Sans", sans-serif;
  font-size: 12px;
  color: #3b3b3b;
  overflow: hidden;
}
button, select, input {
  font: inherit;
  color: inherit;
}
button {
  border: none;
  background: none;
  padding: 0;
  margin: 0;
  white-space: nowrap;
}
svg {
  display: block;
  flex: none;
}
.grow {
  flex: 1;
}
.tri {
  display: inline-block;
  width: 0;
  height: 0;
  border: 3px solid transparent;
  border-top-color: #6a6a6a;
  border-bottom: none;
  vertical-align: middle;
}
.tri.big-tri {
  border-width: 4px;
  border-top-color: #4a4a4a;
  border-bottom: none;
  margin-left: 8px;
}

/* Fensterrahmen */
.window {
  min-width: 0;
  min-height: 0;
  display: flex;
  flex-direction: column;
  border: 1px solid #a79fb6;
  border-radius: 7px 7px 4px 4px;
  overflow: hidden;
}
.word {
  font-family: "Noto Sans", "Open Sans", sans-serif;
  background:
    linear-gradient(#6d6490, #3f3058 18%, #4a3560 29%, #2b1a40 30%, #2f1c40 42%, #5a3058 46%, #3a1838 56%, #7a2848 62%, #201030 66%, #201030 70%, #7a2850 74%, #3a1838 88%, #150a20) left / 12px 100% no-repeat,
    linear-gradient(#7d739c, #a98ac0 10%, #7a4f8a 20%, #85628f 30%, #5a2a55 43%, #a04a50 54%, #c8b080 60%, #d06040 64%, #5a2850 67%, #c06848 72%, #b05038 78%, #6a2c50 86%, #2a1838) right / 12px 100% no-repeat,
    #1c0f28;
}
.acro {
  background:
    linear-gradient(#8d80a8, #9c8bb0 14%, #d6cbdc 26%, #65407c 27%, #583068 42%, #7d4a7a 50%, #a05a68 56%, #8a5468 62%, #4a2458 66%, #a05868 71%, #8a4068 80%, #3a2048) left / 12px 100% no-repeat,
    linear-gradient(#8d80a8, #5a4a7a 14%, #c8c2d4 26%, #3a285c 27%, #4a2a5c 46%, #634670 50%, #3a2348 57%, #6a3a58 60%, #2c1f42 65%, #7a4a78 78%, #2a1a3c 92%) right / 12px 100% no-repeat,
    #3c2650;
}
.client {
  flex: 1;
  min-height: 0;
  margin: 0 6px 5px;
  display: flex;
  flex-direction: column;
  border: 1px solid #2c2435;
  border-top: none;
  box-shadow: 0 0 0 1px rgba(220, 210, 230, .6);
}
.titlebar {
  display: flex;
  align-items: flex-start;
  padding: 0 6px 0 8px;
}
.win-title {
  margin: 0;
  font-family: "Noto Sans", "Open Sans", sans-serif;
  font-size: 14px;
  font-weight: 400;
  line-height: 20px;
  color: #0c0a10;
  white-space: nowrap;
  padding: 0 4px;
  border-radius: 10px;
  background: rgba(196, 186, 212, .5);
  box-shadow: 0 0 10px 6px rgba(196, 186, 212, .5);
}
.controls {
  display: flex;
  height: 23px;
  border: 1px solid rgba(230, 220, 240, .7);
  border-top: none;
  border-radius: 0 0 5px 5px;
  overflow: hidden;
}
.controls button {
  width: 34px;
  display: grid;
  place-items: center;
  background: rgba(160, 130, 190, .35);
  border-right: 1px solid rgba(230, 220, 240, .5);
}
.controls .close {
  width: 58px;
  border-right: none;
}
.acro .controls button {
  background: linear-gradient(#a49cb8, #8a80a2 45%, #4d4268 50%, #6a5e88);
}
.acro .controls .close {
  background: linear-gradient(#dc9c90, #cf6a58 45%, #b02a18 50%, #cf4f34);
}

/* Word: Titel und Register */
.word-head {
  background:
    radial-gradient(ellipse 20px 26px at 78px 36px, rgba(236, 214, 240, 1), rgba(236, 214, 240, 0)),
    radial-gradient(ellipse 24px 10px at 70px 14px, rgba(150, 50, 90, .7), rgba(150, 50, 90, 0)),
    linear-gradient(rgba(238, 235, 242, 0) 30%, rgba(238, 235, 242, .5) 62%, #f3f1f5),
    linear-gradient(to right, #6a5d86, #4a3a68 12%, #38265a 22%, #45305f 45%, #4b2e68 65%, #7a5a94 88%, #7c6a90 97%, #8a7f9a);
}
.word-head .titlebar {
  height: 36px;
}
.word-head .win-title {
  margin: 8px auto 0 0;
}
.qat {
  display: flex;
  align-items: center;
  gap: 5px;
  height: 40px;
  width: 374px;
}
.qat-btn {
  min-width: 20px;
  display: grid;
  place-items: center;
}
.undo {
  margin-left: 4px;
}
.qat-line {
  width: 2px;
  height: 19px;
  border-left: 1px solid #4e4462;
  border-right: 1px solid #a89fb8;
}
.tabs {
  display: flex;
  height: 29px;
  padding: 0 7px;
}
.tab {
  height: 29px;
  padding: 2px 14px 0;
  color: #4b4b52;
}
.tab.file {
  width: 70px;
  margin-right: 4px;
  color: #fff;
  background: linear-gradient(#2a6ac8, #1e56b4 50%, #3a84dc);
  border: 1px solid #16458f;
  border-bottom: none;
  border-radius: 3px 3px 0 0;
}
.tab.active {
  width: 53px;
  padding: 1px 0 0;
  margin-right: 1px;
  background: #fff;
  border: 1px solid #b3b9c4;
  border-bottom: none;
  border-radius: 3px 3px 0 0;
}
.tab-icon {
  width: 26px;
  display: grid;
  place-items: center;
}

/* Menüband */
.ribbon {
  display: flex;
  height: 106px;
  flex: none;
  border-top: 1px solid #a9b0ba;
  border-bottom: 1px solid #868d97;
  background: linear-gradient(#fff 45%, #f4f5f7 75%, #e8ebee);
}
.group {
  display: flex;
  flex-direction: column;
  border-right: 1px solid #b9bdc4;
}
.clip { width: 121px; }
.font { width: 223px; }
.para { width: 185px; }
.styles { width: 195px; }
.edit { width: 69px; }
.group-body {
  display: flex;
  flex: 1;
  padding: 3px 5px 0;
}
.group-body.rows {
  flex-direction: column;
}
.row {
  display: flex;
  height: 27px;
  align-items: center;
}
.group-label {
  display: flex;
  height: 20px;
  padding: 0 4px;
  line-height: 22px;
  color: #70757d;
}
.group-label span {
  flex: 1;
  padding-right: 14px;
  text-align: center;
}
.launch {
  width: 9px;
  height: 9px;
  margin-top: 7px;
  border: 1px solid #9a9ea5;
  border-right: none;
  border-bottom: none;
  background: linear-gradient(135deg, transparent 45%, #9a9ea5 45%) 3px 3px / 5px 5px no-repeat;
}
.clip .group-label {
  padding-left: 3px;
}
.clip .group-label span {
  text-align: left;
  padding: 0;
}
.clip .group-body {
  padding: 3px 0 0;
}
.styles .group-body {
  padding: 3px 5px 0 2px;
}
.big {
  flex: 1;
  display: flex;
  flex-direction: column;
  align-items: center;
  padding-top: 5px;
  line-height: 17px;
}
.big svg {
  margin-bottom: 8px;
}
.paste {
  flex: none;
  width: 72px;
  margin-left: 11px;
}
.paste .tri,
.edit .tri {
  margin-top: 6px;
}
.find-box {
  width: 38px;
  height: 38px;
  display: grid;
  place-items: center;
  margin-bottom: 4px;
  border: 1px solid #cfd1d8;
  border-radius: 3px;
  background: #fff;
}
.find-box svg {
  margin: 0;
}
.small-col {
  margin-left: -9px;
}
.small-col .ib {
  height: 27px;
}
.ib {
  width: 28px;
  height: 26px;
  display: flex;
  align-items: center;
  justify-content: center;
}
.ib.narrow {
  width: 24px;
}
.ib.on {
  background: linear-gradient(#fbc95c, #fddb72 50%, #fff08e);
  border: 1px solid #c2913a;
  border-radius: 3px;
}
.ar {
  width: 12px;
  height: 26px;
  display: grid;
  place-items: center;
}
.sep {
  width: 1px;
  height: 20px;
  margin: 0 3px 0 2px;
  background: #cdd1d8;
}
.sep.wide {
  margin: 0 4px;
}
.glyph {
  font-family: "Liberation Serif", serif;
  font-size: 14px;
  color: #222;
}
.glyph.sm {
  font-size: 12px;
}
.glyph.lg {
  font-size: 17px;
}
.glyph sub,
.glyph sup {
  font-size: 8px;
  font-weight: 700;
  color: #2c56b0;
}
.glyph sub {
  margin-top: 8px;
}
.glyph sup {
  margin-bottom: 8px;
}
.up, .down {
  align-self: flex-start;
  margin-top: 6px;
  border: 3px solid transparent;
}
.up {
  border-bottom-color: #3c5fa5;
  border-top: none;
}
.down {
  border-top-color: #3c5fa5;
  border-bottom: none;
}
select {
  appearance: none;
  border: 1px solid #cdd1d6;
  border-radius: 0;
  background: #fff url("data:image/svg+xml,%3Csvg xmlns='http://www.w3.org/2000/svg' width='6' height='4'%3E%3Cpath d='M0 0h6L3 4z' fill='%23666'/%3E%3C/svg%3E") right 4px center no-repeat;
  color: #000;
}
.combos select {
  height: 26px;
  padding: 0 2px;
}
.combos .font-name {
  width: 138px;
}
.combos .font-size {
  width: 76px;
  border-left: none;
}

/* Dokumentbereich */
.workspace {
  flex: 1;
  min-height: 0;
  display: flex;
  background: linear-gradient(#cdd1d5, #c5c9cd 50%, #b9bcbf);
  border-bottom: 1px solid #8f959e;
}
.doc-area {
  flex: 1;
  min-width: 0;
  display: flex;
  flex-direction: column;
}
.ruler-row {
  display: flex;
  height: 48px;
  padding: 4px 49px 0 0;
}
.tab-stop {
  width: 28px;
  height: 28px;
  display: grid;
  place-items: center;
  border: 1px solid #868d97;
  margin-right: 49px;
}
/* Standardtabstopps unter dem Lineal alle 1,25 cm */
.ruler-wrap {
  flex: 1;
  padding-top: 5px;
  background: repeating-linear-gradient(to right, #5f6063 0 1px, transparent 1px 47px) 142px 23px / 582px 3px no-repeat;
}
.hruler {
  display: flex;
  height: 17px;
  border: 1px solid #868d97;
  background: linear-gradient(to right, transparent 12%, #f7f7f7 12%, #f7f7f7 88%, #868d97 88%, transparent 88%);
  color: #5f6063;
  line-height: 15px;
}
.hruler span {
  flex: 1;
  text-align: center;
  background:
    linear-gradient(#5f6063, #5f6063) 25% 50% / 1px 2px no-repeat,
    linear-gradient(#5f6063, #5f6063) 76% 50% / 1px 2px no-repeat,
    linear-gradient(#5f6063, #5f6063) 0 50% / 1px 6px no-repeat;
}
.hruler span:first-child {
  background-size: 1px 2px, 1px 2px, 0 0;
}
.markers {
  display: flex;
  justify-content: space-between;
  margin: -20px 88px 0 89px;
  position: relative;
}
.page-row {
  flex: 1;
  min-height: 0;
  display: flex;
  overflow: hidden;
  padding-right: 49px;
}
.vruler-wrap {
  width: 28px;
  flex: none;
  padding-left: 5px;
  margin-right: 49px;
  background: #cdd1d5;
}
.vruler {
  width: 18px;
  height: 1100px;
  padding-top: 1px;
  display: grid;
  grid-template-rows: repeat(29, 1fr);
  border: 1px solid #868d97;
  background: linear-gradient(transparent 96px, #868d97 96px, #868d97 97px, #f7f7f7 97px);
  color: #5f6063;
}
.vruler span {
  writing-mode: vertical-rl;
  transform: rotate(180deg);
  text-align: center;
  line-height: 16px;
  background:
    linear-gradient(#5f6063, #5f6063) 50% 25% / 2px 1px no-repeat,
    linear-gradient(#5f6063, #5f6063) 50% 76% / 2px 1px no-repeat,
    linear-gradient(#5f6063, #5f6063) 50% 0 / 6px 1px no-repeat;
}
.page {
  flex: 1;
  background: #a2a9b4;
  border: 1px solid #9ba3ae;
  padding-top: 280px;
  box-shadow: 0 0 9px 1px rgba(80, 85, 90, .8);
}

.scroll {
  width: 21px;
  display: flex;
  flex-direction: column;
  padding-top: 5px;
  background: #dfe3ea;
}
.split {
  height: 4px;
  margin: 0 5px 2px;
  border-top: 2px solid #6d737c;
}
.sb {
  height: 20px;
  flex: none;
  display: grid;
  place-items: center;
}
.ruler-toggle {
  border: 1px solid #868d97;
}
.track {
  flex: 1;
  padding-right: 1px;
}
.thumb {
  height: 73%;
  display: grid;
  place-items: center;
  border: 1px solid #868d97;
  background: linear-gradient(to right, #e6eaf0, #f5f6fa 40%, #dadee4);
}
.thumb i {
  width: 8px;
  height: 8px;
  background: repeating-linear-gradient(#777 0 1px, transparent 1px 2px);
}
.browse {
  height: 64px;
  display: flex;
  flex-direction: column;
  border-top: 1px solid #b4bac4;
}
.browse button {
  flex: 1;
  display: grid;
  place-items: center;
}

/* Statusleiste */
.status {
  height: 26px;
  flex: none;
  display: flex;
  align-items: center;
  background: linear-gradient(#eef0f2, #d6d9dc 50%, #bfc3c7);
}
.st {
  height: 24px;
  display: flex;
  align-items: center;
  padding: 0 10px 0 8px;
  border-right: 1px solid #8f949b;
}
.st + .st {
  padding-left: 10px;
}
.lang {
  gap: 16px;
}
.st-line {
  width: 1px;
  height: 24px;
  margin-right: 4px;
  background: #8f949b;
}
.vw {
  width: 23px;
  height: 24px;
  display: grid;
  place-items: center;
}
.vw.on {
  background: linear-gradient(#fbc95c, #fddb72 50%, #fff08e);
  border: 1px solid #c2913a;
  border-radius: 3px;
}
.zoom-val {
  width: 52px;
  padding-left: 8px;
  text-align: left;
}
.zoom-range {
  appearance: none;
  width: 125px;
  height: 20px;
  margin: 0;
  background: linear-gradient(#8d939b, #8d939b) center / 100% 1px no-repeat,
    linear-gradient(#8d939b, #8d939b) center / 1px 8px no-repeat;
}
.zoom-range::-webkit-slider-thumb {
  appearance: none;
  width: 11px;
  height: 16px;
  background: url("data:image/svg+xml,%3Csvg xmlns='http://www.w3.org/2000/svg' width='11' height='16'%3E%3Cpath d='M.5.5h10v10l-5 5-5-5z' fill='%23f5f6f8' stroke='%23666c75'/%3E%3C/svg%3E");
}
.grip {
  align-self: flex-end;
  margin-left: 8px;
}

/* Acrobat */
.acro .titlebar {
  height: 34px;
  background: linear-gradient(to right, #7d6c98, #6a5585 14%, #43285e 32%, #4a3166 50%, #38245a 66%, #46305f 78%, #3a2454 84%, #6d608a 98%);
  border-bottom: 1px solid #b5adc2;
}
.acro .win-title {
  margin: 7px auto 0 0;
  padding: 0 4px 0 2px;
}
.pdf-icon {
  margin-top: 7px;
}
.menubar {
  height: 25px;
  flex: none;
  display: flex;
  align-items: center;
  padding: 0 9px 0 8px;
  background: #dedede;
  font-size: 14px;
  color: #000;
}
.menubar button {
  margin-right: 17px;
}
.menubar .menu-x {
  margin: 0;
}
.bar {
  height: 37px;
  flex: none;
  display: flex;
  align-items: center;
  padding: 0 9px;
  border: 1px solid #fff;
  border-top: 1px solid #2c2c2c;
  background: linear-gradient(#f8f8f8, #e2e2e2);
}
.bar.second {
  background: linear-gradient(#eee, #d6d6d6);
  padding: 0 0 0 4px;
}
.bar-sep {
  width: 1px;
  height: 26px;
  flex: none;
  background: #5c5c5c;
}
.txt {
  display: flex;
  align-items: center;
  gap: 9px;
  font-weight: 700;
  color: #3f3f3f;
  margin-right: 19px;
}
.txt .tri.big-tri {
  margin-left: 0;
}
.bar-sep + .txt {
  margin: 0 20px 0 15px;
}
.tb {
  width: 38px;
  display: grid;
  place-items: center;
}
.bar-sep + .tb {
  margin-left: 6px;
}
.tb + .bar-sep {
  margin-left: 6px;
}
.tb + .bar-sep + .tb {
  margin-left: 8px;
}
.tb.slim {
  width: 33px;
}
.custom {
  margin-right: 25px;
}
.expand {
  width: 24px;
  height: 24px;
  margin-left: 16px;
  display: grid;
  place-items: center;
  border: 1px solid #999;
  background: linear-gradient(#fff, #ccc);
}
.rnd {
  width: 33px;
  display: grid;
  place-items: center;
}
.page-no {
  width: 27px;
  height: 26px;
  margin-left: 4px;
  padding: 0;
  border: 1px solid #4a4a4a;
  text-align: center;
  background: #fff;
  color: #000;
}
.page-of {
  margin: 0 9px 0 6px;
  color: #111;
}
.cursor {
  width: 27px;
  height: 27px;
  margin: 0 2px 0 9px;
  display: grid;
  place-items: center;
  border: 1px solid #777;
  background: #b9b9b9;
}
.hand {
  margin-right: 7px;
}
.bar-sep + .rnd {
  margin-left: 6px;
}
.zoom-sel {
  width: 71px;
  height: 26px;
  margin: 0 11px 0 4px;
  padding: 0 7px;
  border: 1px solid #4a4a4a;
  background:
    url("data:image/svg+xml,%3Csvg xmlns='http://www.w3.org/2000/svg' width='8' height='5'%3E%3Cpath d='M0 0h8L4 5z' fill='%23444'/%3E%3C/svg%3E") right 7px center no-repeat,
    linear-gradient(to right, #4a4a4a 1px, #e6e6e6 1px) right / 22px 100% no-repeat,
    #fff;
}
.panels {
  display: flex;
  font-size: 14px;
  font-weight: 700;
  color: #4d6f9c;
}
.panels button {
  height: 27px;
  padding: 0 13px 0 14px;
}
.panels button:first-child {
  padding-right: 15px;
}
.panels button + button {
  border-left: 1px dotted #444;
}
.viewer {
  flex: 1;
  min-height: 0;
  display: flex;
  border-top: 1px solid #2c2c2c;
  background: #565656;
}
.side {
  width: 42px;
  flex: none;
  display: flex;
  flex-direction: column;
  align-items: flex-start;
  padding: 9px 7px;
  gap: 19px;
  background: #676767;
  border-right: 1px solid #000;
}
.side button {
  width: 24px;
  height: 24px;
  display: grid;
  place-items: center;
}
.canvas {
  flex: 1;
  min-width: 0;
  display: flex;
  justify-content: center;
  padding: 4px 0 5px;
}
.pdf-page {
  height: 100%;
  aspect-ratio: 210 / 297;
  padding-top: 231px;
  background: #44546a;
}
.pdf-scroll {
  width: 21px;
  display: flex;
  flex-direction: column;
  align-items: center;
  background: #efefef;
  border-left: 1px solid #fff;
}
.stub {
  width: 100%;
  height: 8px;
  border-bottom: 1px solid #8a8a8a;
}
.pdf-scroll button {
  height: 21px;
  display: grid;
  place-items: center;
}
```
